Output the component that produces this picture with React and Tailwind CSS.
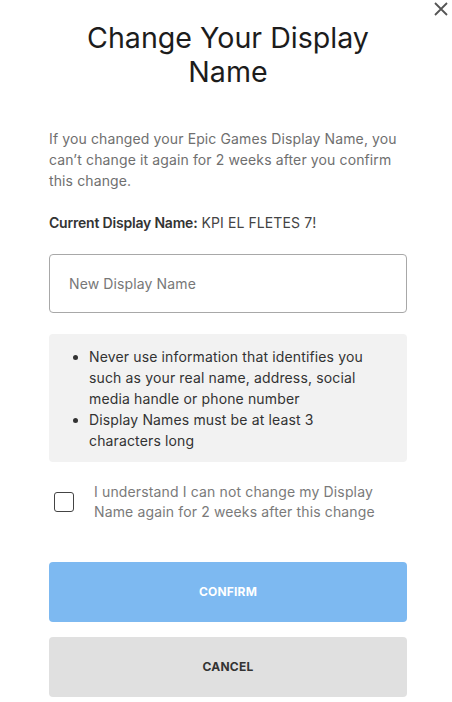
export default function App() {
  return (
    <div className="relative w-[452px] h-[702px] bg-white overflow-hidden" style={{ fontFamily: "Inter, 'Noto Sans', sans-serif" }}>
      <button className="absolute right-[3px] top-[1px] w-[16px] h-[16px] flex items-center justify-center text-[#555]">
        <svg width="14" height="14" viewBox="0 0 14 14" fill="none" stroke="currentColor" strokeWidth="1.8">
          <path d="M1 1L13 13M13 1L1 13" />
        </svg>
      </button>
      <div className="w-[358px] ml-[49px] flex flex-col">
        <h1 className="mt-[21px] text-center text-[28.6px] leading-[34px] text-[#1c1c1c] font-normal">
          Change Your Display Name
        </h1>
        <p className="mt-[39px] text-[14px] leading-[21px] text-[#6f6f6f] tracking-[0.12px]">
          If you changed your Epic Games Display Name, you can’t change it again for 2 weeks after you confirm this change.
        </p>
        <p className="mt-[21px] text-[14px] leading-[21px] text-[#333] tracking-[0.1px]">
          <span className="font-semibold tracking-[-0.2px]">Current Display Name:</span> <span className="text-[#444]">KPI EL FLETES 7!</span>
        </p>
        <div className="mt-[21px] h-[59px] border border-[#a8a8a8] rounded-[4px] flex items-center px-[19px]">
          <span className="text-[14px] text-[#777] tracking-[0.12px]">New Display Name</span>
        </div>
        <div className="mt-[21px] bg-[#f2f2f2] rounded-[4px] pt-[12px] pb-[11px] pl-[40px] pr-[30px]">
          <ul className="list-disc text-[14px] leading-[21px] text-[#333] tracking-[0.14px]">
            <li>Never use information that identifies you such as your real name, address, social media handle or phone number</li>
            <li>Display Names must be at least 3 characters long</li>
          </ul>
        </div>
        <div className="mt-[20px] flex items-start">
          <div className="ml-[5px] mt-[10px] w-[20px] h-[20px] border-[1.5px] border-[#444] rounded-[3px] shrink-0" />
          <span className="ml-[20px] text-[14px] leading-[20px] text-[#7a7a7a] tracking-[0.14px]">
            I understand I can not change my Display Name again for 2 weeks after this change
          </span>
        </div>
        <button className="mt-[40px] h-[60px] w-full rounded-[4px] bg-[#7db9f1] text-white text-[12px] font-bold tracking-[0.2px]">
          CONFIRM
        </button>
        <button className="mt-[15px] h-[60px] w-full rounded-[4px] bg-[#e0e0e0] text-[#333] text-[12px] font-bold tracking-[0.2px]">
          CANCEL
        </button>
      </div>
    </div>
  );
}
